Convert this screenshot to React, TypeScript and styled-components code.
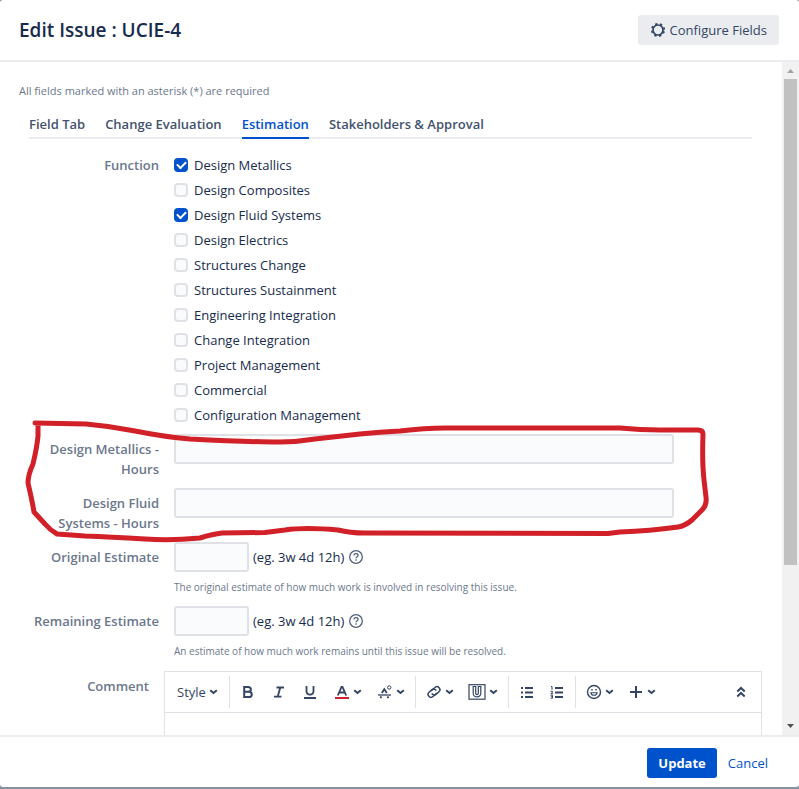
import React, { useState } from "react";
import styled, { createGlobalStyle } from "styled-components";

const GlobalStyle = createGlobalStyle`
  * { box-sizing: border-box; }
  body {
    margin: 0;
    background: #8590a2;
    color: #172b4d;
    font-family: "Open Sans", "Noto Sans", sans-serif;
    font-size: 13px;
    line-height: 20px;
  }
  button, input { font: inherit; color: inherit; }
`;

const Dialog = styled.section`
  display: flex;
  flex-direction: column;
  height: calc(100vh - 2px);
  background: #fff;
  border-radius: 3px;
  overflow: hidden;
`;

const Header = styled.header`
  flex: none;
  display: flex;
  align-items: center;
  justify-content: space-between;
  padding: 15px 20px 15px 19px;
  border-bottom: 2px solid #ebecf0;
`;

const Title = styled.h2`
  margin: 0;
  font-size: 19px;
  line-height: 30px;
  font-weight: 600;
`;

const Configure = styled.button`
  display: flex;
  align-items: center;
  gap: 4px;
  height: 30px;
  padding: 0 12px;
  border: 0;
  border-radius: 3px;
  background: #ebecf0;
  color: #344563;
`;

const Body = styled.div`
  flex: 1;
  min-height: 0;
  display: flex;
`;

const Content = styled.form`
  flex: 1;
  min-width: 0;
  overflow: hidden;
  padding: 19px 20px 0 19px;
`;

const Hint = styled.p`
  margin: 0;
  font-size: 11px;
  color: #6b778c;
`;

const Tabs = styled.nav`
  display: flex;
  gap: 20px;
  margin: 13px 10px 0 10px;
  border-bottom: 2px solid #ebecf0;
`;

const Tab = styled.a<{ $active?: boolean }>`
  margin-bottom: -2px;
  padding-bottom: 3px;
  border-bottom: 2px solid ${(p) => (p.$active ? "#0052cc" : "transparent")};
  color: ${(p) => (p.$active ? "#0052cc" : "#42526e")};
  font-weight: 600;
  text-decoration: none;
`;

const Fields = styled.div`
  display: flex;
  flex-direction: column;
  padding: 16px 0 0 10px;
`;

const Row = styled.div`
  display: grid;
  grid-template-columns: 130px minmax(0, 1fr);
  column-gap: 15px;
  align-items: start;
  margin-bottom: 4px;
`;

const CommentRow = styled(Row)`
  grid-template-columns: 120px minmax(0, 1fr);
  margin-top: 1px;
`;

const labelCss = `
  padding-top: 5px;
  text-align: right;
  font-weight: 600;
  color: #6b778c;
`;
const Label = styled.label`${labelCss}`;
const GroupLabel = styled.span`${labelCss} padding-top: 0;`;
const CommentLabel = styled.label`${labelCss}`;

const Options = styled.div`
  display: flex;
  flex-direction: column;
  gap: 5px;
  padding-bottom: 5px;
`;

const Option = styled.label`
  display: flex;
  align-items: center;
  gap: 6px;
`;

const CheckBox = styled.input`
  appearance: none;
  width: 14px;
  height: 14px;
  margin: 0;
  display: grid;
  place-items: center;
  border: 2px solid #dfe1e6;
  border-radius: 4px;
  background: #fafbfc;
  &:checked {
    border-color: #0052cc;
    background: #0052cc;
  }
  &:checked::after {
    content: "";
    width: 7px;
    height: 4px;
    margin-bottom: 2px;
    border: solid #fff;
    border-width: 0 0 2px 2px;
    transform: rotate(-45deg);
  }
`;

const TextField = styled.input<{ $short?: boolean }>`
  display: block;
  width: 100%;
  max-width: ${(p) => (p.$short ? 75 : 500)}px;
  height: 30px;
  padding: 3px 4px;
  border: 2px solid #dfe1e6;
  border-radius: 3px;
  background: #fafbfc;
`;

const Marked = styled.div`
  position: relative;
`;

const Scribble = styled.svg`
  position: absolute;
  left: -29px;
  top: -16px;
  width: 700px;
  height: 130px;
  overflow: visible;
  pointer-events: none;
`;

const TallRow = styled(Row)`
  min-height: 50px;
`;

const Inline = styled.div`
  display: flex;
  align-items: center;
  gap: 4px;
`;

const Help = styled.button`
  display: flex;
  padding: 0;
  border: 0;
  background: none;
  color: #505f79;
`;

const Description = styled.p`
  margin: 5px 0;
  font-size: 10px;
  line-height: 20px;
  color: #6b778c;
`;

const Editor = styled.div`
  border: 1px solid #dfe1e6;
`;

const Toolbar = styled.div`
  display: flex;
  align-items: center;
  height: 41px;
  border-bottom: 1px solid #dfe1e6;
  color: #344563;
`;

const Group = styled.div<{ $wide?: boolean }>`
  display: flex;
  align-items: center;
  justify-content: space-between;
  flex: 0 1 ${(p) => (p.$wide ? "186px" : "auto")};
  height: 32px;
  padding: 0 10px;
  &:first-child { padding: 0 11px 0 12px; }
  & + & { border-left: 1px solid #dfe1e6; }
`;

const Tool = styled.button`
  display: flex;
  align-items: center;
  gap: 3px;
  padding: 0;
  border: 0;
  background: none;
`;

const TwoTools = styled.div`
  display: flex;
  gap: 14px;
`;

const Push = styled.div`
  margin-left: auto;
  padding-right: 12px;
`;

const CommentArea = styled.textarea`
  display: block;
  width: 100%;
  height: 120px;
  border: 0;
  resize: none;
  outline: 0;
`;

const ScrollTrack = styled.div`
  flex: none;
  display: flex;
  flex-direction: column;
  align-items: center;
  width: 17px;
  background: #f1f1f1;
`;

const ScrollArrow = styled.svg`
  flex: none;
  width: 17px;
  height: 17px;
`;

const ScrollRail = styled.div`
  flex: 1;
  width: 13px;
`;

const ScrollThumb = styled.div`
  height: 76%;
  background: #c1c1c1;
`;

const Footer = styled.footer`
  flex: none;
  display: flex;
  align-items: center;
  justify-content: flex-end;
  gap: 11px;
  padding: 11px 31px 9px;
  border-top: 2px solid #ebecf0;
`;

const Update = styled.button`
  height: 30px;
  padding: 0 11px;
  border: 0;
  border-radius: 3px;
  background: #0052cc;
  color: #fff;
  font-weight: 700;
`;

const Cancel = styled.a`
  color: #0052cc;
  text-decoration: none;
`;

type IconProps = { w?: number; h?: number; children: React.ReactNode };
const Icon = ({ w = 16, h = 16, children }: IconProps) => (
  <svg width={w} height={h} viewBox={`0 0 ${w} ${h}`} fill="none" stroke="currentColor" strokeWidth="2" aria-hidden="true">
    {children}
  </svg>
);

const Caret = () => (
  <Icon w={9} h={16}><path d="M1.2 6.200 4.500 9l3.300-2.800" /></Icon>
);
const Gear = () => (
  <Icon>
    <circle cx="8" cy="8" r="5" strokeWidth="1.700" />
    <circle cx="8" cy="8" r="6.200" strokeWidth="1.700" strokeDasharray="2.300 2.570" transform="rotate(12 8 8)" />
  </Icon>
);
const HelpIcon = () => (
  <Icon>
    <circle cx="8" cy="8" r="6.300" strokeWidth="1.300" />
    <path d="M6 6.600C6 5.300 6.800 4.700 8 4.700s2 .7 2 1.700c0 1.400-1.900 1.400-1.900 2.900M8.100 10.300v1.400" strokeWidth="1.300" />
  </Icon>
);
const Bold = () => (
  <Icon><path d="M4.200 3v10h4.600c4 0 4-5.200 0-5.200H4.200h4c3.600 0 3.600-4.800 0-4.800z" strokeWidth="2" /></Icon>
);
const Italic = () => (
  <Icon><path d="M5.500 3.500H13M3 12.700h7.500M9.300 3.500 6.700 12.700" strokeWidth="1.800" /></Icon>
);
const Underline = () => (
  <Icon><path d="M4.500 2v5c0 4.700 7 4.700 7 0V2M2 14h12" strokeWidth="1.800" /></Icon>
);
const TextColor = () => (
  <Icon>
    <path d="M3.800 11.500 7.500 3h1l3.700 8.500M5.300 8.500h5.400" strokeWidth="1.800" />
    <path d="M1 14h14" stroke="#d0202c" />
  </Icon>
);
const MoreStyles = () => (
  <Icon>
    <path d="M1 11h13" strokeWidth="1.300" />
    <path d="M4.800 9 7.300 5.200 9.800 9M4.300 12.400l-.8 1.800M10.500 12.400l.8 1.800" strokeWidth="1.800" />
    <circle cx="12.200" cy="3.500" r="1.700" strokeWidth="1" />
  </Icon>
);
const Link = () => (
  <Icon>
    <g transform="rotate(-42 8 8)" strokeWidth="1.500">
      <path d="M9.500 10.700H4.200a2.900 2.900 0 0 1 0-5.800h3.600a2.900 2.900 0 0 1 2.800 3.600" />
      <path d="M6.500 5.300h5.300a2.900 2.900 0 0 1 0 5.800H8.200a2.900 2.900 0 0 1-2.800-3.600" />
    </g>
  </Icon>
);
const Attach = () => (
  <Icon w={18}>
    <rect x="1" y="0.700" width="16" height="14.500" strokeWidth="1.200" />
    <path d="M5.200 2.500v6.700c0 5 7.600 5 7.600 0V2.500h-2.500v6.700c0 1.800-2.600 1.800-2.600 0V2.500z" strokeWidth="1.200" />
  </Icon>
);
const Bullets = () => (
  <Icon><path d="M2 4h2M2 8.500h2M2 13h2M6 4h8M6 8.500h8M6 13h8" /></Icon>
);
const Numbers = () => (
  <Icon>
    <path d="M6 4h8M6 8.500h8M6 13h8" />
    <path d="M2 2.500h1v3.200M1.500 7.300h2v1L1.800 9.700H4M1.500 11.200h2v3h-2M2 12.700h1.500" strokeWidth="1" />
  </Icon>
);
const Smile = () => (
  <Icon>
    <circle cx="8" cy="8" r="6.500" strokeWidth="1.400" />
    <path d="M5.300 5.700h1.400M9.300 5.700h1.400" strokeWidth="1.500" />
    <path d="M4.900 8.800h6.200c-.6 3.200-5.600 3.200-6.200 0z" strokeWidth="1.100" />
  </Icon>
);
const Plus = () => (
  <Icon><path d="M8 2v12M2 8h12" /></Icon>
);
const Collapse = () => (
  <Icon><path d="M4.300 7.500 8 4l3.700 3.500M4.300 12.500 8 9l3.700 3.500" /></Icon>
);

const functions = [
  "Design Metallics", "Design Composites", "Design Fluid Systems", "Design Electrics",
  "Structures Change", "Structures Sustainment", "Engineering Integration", "Change Integration",
  "Project Management", "Commercial", "Configuration Management",
];

const Menu = ({ label, children }: { label: string; children: React.ReactNode }) => (
  <Tool type="button" aria-label={label}>{children}<Caret /></Tool>
);

const Estimate = ({ id, label, note }: { id: string; label: string; note: string }) => (
  <Row>
    <Label htmlFor={id}>{label}</Label>
    <div>
      <Inline>
        <TextField id={id} $short />
        <span>(eg. 3w 4d 12h)</span>
        <Help type="button" aria-label={`Help for ${label}`}><HelpIcon /></Help>
      </Inline>
      <Description>{note}</Description>
    </div>
  </Row>
);

export default function App() {
  const [checked, setChecked] = useState(["Design Metallics", "Design Fluid Systems"]);
  const toggle = (name: string) =>
    setChecked((c) => (c.includes(name) ? c.filter((n) => n !== name) : [...c, name]));

  return (
    <>
      <GlobalStyle />
      <Dialog role="dialog" aria-labelledby="title">
        <Header>
          <Title id="title">Edit Issue : UCIE-4</Title>
          <Configure type="button"><Gear />Configure Fields</Configure>
        </Header>
        <Body>
          <Content>
            <Hint>All fields marked with an asterisk (*) are required</Hint>
            <Tabs>
              <Tab href="#field">Field Tab</Tab>
              <Tab href="#change">Change Evaluation</Tab>
              <Tab href="#estimation" $active>Estimation</Tab>
              <Tab href="#stakeholders">Stakeholders &amp; Approval</Tab>
            </Tabs>
            <Fields>
              <Row role="group" aria-labelledby="function">
                <GroupLabel id="function">Function</GroupLabel>
                <Options>
                  {functions.map((name) => (
                    <Option key={name}>
                      <CheckBox type="checkbox" checked={checked.includes(name)} onChange={() => toggle(name)} />
                      {name}
                    </Option>
                  ))}
                </Options>
              </Row>
              <Marked>
                <TallRow>
                  <Label htmlFor="metallics">Design Metallics - Hours</Label>
                  <TextField id="metallics" />
                </TallRow>
                <TallRow>
                  <Label htmlFor="fluid">Design Fluid Systems - Hours</Label>
                  <TextField id="fluid" />
                </TallRow>
                <Scribble viewBox="0 418 700 130" fill="none" stroke="#d22028" strokeWidth="5" strokeLinecap="round" strokeLinejoin="round">
                  <path d="M35 423 L86 424 Q110 426 135 431 Q165 437 190 439 Q250 442 280 442 Q297 442 315 439 L360 434 Q380 432 400 431 Q425 428 445 428 L620 428 Q640 430 660 430 L698 430 Q703 430 703 434 Q702 462 704 480 L706 497 Q707 505 702 510 L692 520 Q685 526 678 527 Q650 531 620 532 L608 533.500 L365 533 Q350 533 338 530 Q305 527 285 530 L265 532.500 L222 533 Q213 534 200 538 Q170 541 145 539 Q110 537 85 536 L57 534 Q50 530 45 524 L34 512 Q32 500 28 483 Q28 475 33 464 Q37 447 38 436 L38 424" />
                </Scribble>
              </Marked>
              <Estimate id="original" label="Original Estimate" note="The original estimate of how much work is involved in resolving this issue." />
              <Estimate id="remaining" label="Remaining Estimate" note="An estimate of how much work remains until this issue will be resolved." />
              <CommentRow>
                <CommentLabel htmlFor="comment">Comment</CommentLabel>
                <Editor>
                  <Toolbar role="toolbar" aria-label="Formatting">
                    <Group><Tool type="button">Style<Caret /></Tool></Group>
                    <Group $wide>
                      <Tool type="button" aria-label="Bold"><Bold /></Tool>
                      <Tool type="button" aria-label="Italic"><Italic /></Tool>
                      <Tool type="button" aria-label="Underline"><Underline /></Tool>
                      <Menu label="Text color"><TextColor /></Menu>
                      <Menu label="More styles"><MoreStyles /></Menu>
                    </Group>
                    <Group>
                      <TwoTools>
                        <Menu label="Link"><Link /></Menu>
                        <Menu label="Attachment"><Attach /></Menu>
                      </TwoTools>
                    </Group>
                    <Group>
                      <TwoTools>
                        <Tool type="button" aria-label="Bullet list"><Bullets /></Tool>
                        <Tool type="button" aria-label="Numbered list"><Numbers /></Tool>
                      </TwoTools>
                    </Group>
                    <Group>
                      <TwoTools>
                        <Menu label="Emoji"><Smile /></Menu>
                        <Menu label="Insert"><Plus /></Menu>
                      </TwoTools>
                    </Group>
                    <Push><Tool type="button" aria-label="Collapse toolbar"><Collapse /></Tool></Push>
                  </Toolbar>
                  <CommentArea id="comment" />
                </Editor>
              </CommentRow>
            </Fields>
          </Content>
          <ScrollTrack aria-hidden="true">
            <ScrollArrow viewBox="0 0 17 17"><path d="M5 11h7L8.500 7z" fill="#a3a3a3" /></ScrollArrow>
            <ScrollRail><ScrollThumb /></ScrollRail>
            <ScrollArrow viewBox="0 0 17 17"><path d="M5 6h7l-3.500 4z" fill="#505050" /></ScrollArrow>
          </ScrollTrack>
        </Body>
        <Footer>
          <Update type="button">Update</Update>
          <Cancel href="#cancel">Cancel</Cancel>
        </Footer>
      </Dialog>
    </>
  );
}
